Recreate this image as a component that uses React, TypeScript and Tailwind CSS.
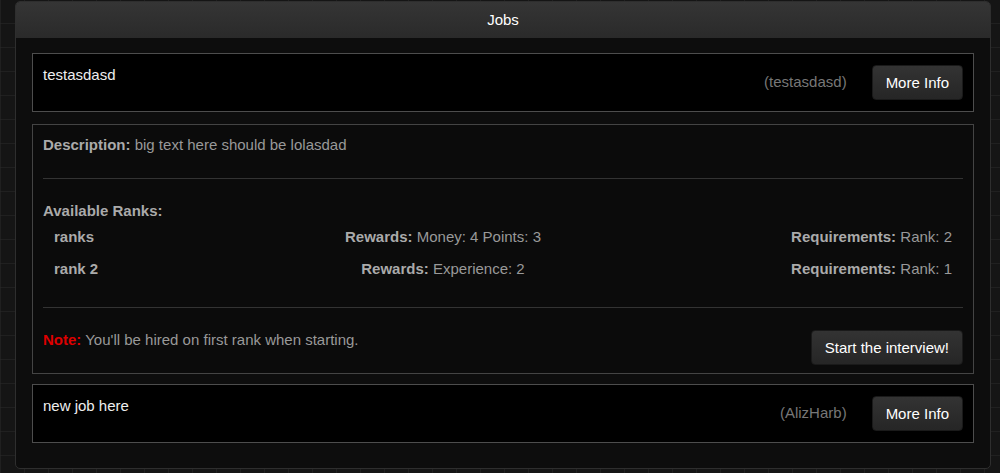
import React from 'react'

const jobs = [
  { name: 'testasdasd', owner: 'testasdasd', open: true },
  { name: 'new job here', owner: 'AlizHarb', open: false },
]

const ranks = [
  { name: 'ranks', rewards: 'Money: 4 Points: 3', req: 'Rank: 2' },
  { name: 'rank 2', rewards: 'Experience: 2', req: 'Rank: 1' },
]

const Button = ({ children }: { children: React.ReactNode }) => (
  <button className="h-[35px] px-[13px] rounded-[4px] border border-[#1a1a1a] bg-gradient-to-b from-[#333333] to-[#262626] text-[15px] text-white leading-5 whitespace-nowrap">
    {children}
  </button>
)

const JobRow = ({ name, owner }: { name: string; owner: string }) => (
  <div className="flex items-start justify-between border border-[#4d4d4d] bg-black px-[10px] py-[11px]">
    <div className="text-[15px] leading-5 text-[#eeeeee]">{name}</div>
    <div className="flex items-center gap-[25px]">
      <span className="text-[15px] text-[#777777]">({owner})</span>
      <Button>More Info</Button>
    </div>
  </div>
)

const JobDetails = () => (
  <div className="border border-[#444444] bg-[#0b0b0b] px-[10px] pt-[10px] pb-[8px] text-[15px] leading-5 text-[#999999]">
    <p>
      <b className="text-[#aaaaaa]">Description:</b> big text here should be lolasdad
    </p>
    <div className="mt-[23px] h-px bg-[#333333]" />

    <div className="mt-[22px] font-bold text-[#aaaaaa]">Available Ranks:</div>
    <div className="px-[11px]">
      {ranks.map((r) => (
        <div key={r.name} className="grid h-8 grid-cols-[260px_258px_1fr] items-center">
          <span className="font-bold text-[#aaaaaa]">{r.name}</span>
          <span className="text-center">
            <b className="text-[#aaaaaa]">Rewards:</b> {r.rewards}
          </span>
          <span className="text-right">
            <b className="text-[#aaaaaa]">Requirements:</b> {r.req}
          </span>
        </div>
      ))}
    </div>
    <div className="mt-[22px] h-px bg-[#333333]" />

    <div className="mt-[22px] flex items-start justify-between">
      <p>
        <b className="text-[#dd0000]">Note:</b> You'll be hired on first rank when starting.
      </p>
      <button className="h-[35px] px-[13px] rounded-[4px] border border-[#1a1a1a] bg-gradient-to-b from-[#333333] to-[#262626] text-[15px] text-white leading-5">
        Start the interview!
      </button>
    </div>
  </div>
)

export default function App() {
  return (
    <div
      className="h-[473px] w-[1000px] overflow-hidden bg-[#151515] bg-[linear-gradient(90deg,rgba(40,40,40,0.6)_1px,transparent_1px),linear-gradient(0deg,rgba(40,40,40,0.6)_1px,transparent_1px)] bg-[size:24px_24px] pt-px pl-[15px]"
      style={{ fontFamily: '"Liberation Sans", Arial, sans-serif' }}
    >
      <div className="flex h-[468px] w-[976px] flex-col overflow-hidden rounded-[5px] border border-[#2e2e2e] bg-[#0d0d0d]">
        <div className="flex h-[36px] shrink-0 items-center justify-center bg-gradient-to-b from-[#353535] to-[#2a2a2a] text-[15px] text-white">
          Jobs
        </div>
        <div className="flex flex-col px-[16px] pt-[15px]">
          <JobRow name={jobs[0].name} owner={jobs[0].owner} />
          <div className="mt-[12px]">
            <JobDetails />
          </div>
          <div className="mt-[10px]">
            <JobRow name={jobs[1].name} owner={jobs[1].owner} />
          </div>
        </div>
      </div>
    </div>
  )
}
